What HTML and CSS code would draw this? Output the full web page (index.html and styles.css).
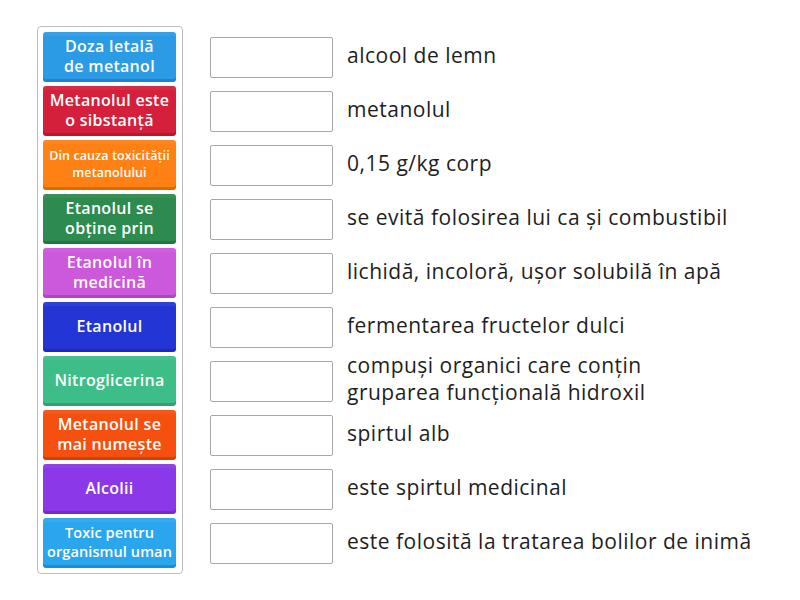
FILE: index.html
```html
<!DOCTYPE html>
<html lang="ro">
<head>
<meta charset="utf-8">
<link rel="stylesheet" href="styles.css">
</head>
<body>
<div class="page">
  <div class="bank">
    <div class="tile c1">Doza letală<br>de metanol</div>
    <div class="tile c2">Metanolul este<br>o sibstanță</div>
    <div class="tile c3 small">Din cauza toxicității<br>metanolului</div>
    <div class="tile c4">Etanolul se<br>obține prin</div>
    <div class="tile c5">Etanolul în<br>medicină</div>
    <div class="tile c6">Etanolul</div>
    <div class="tile c7">Nitroglicerina</div>
    <div class="tile c8">Metanolul se<br>mai numește</div>
    <div class="tile c9">Alcolii</div>
    <div class="tile c10 mid">Toxic pentru<br>organismul uman</div>
  </div>
  <div class="rows">
    <div class="row"><div class="slot"></div><div class="def">alcool de lemn</div></div>
    <div class="row"><div class="slot"></div><div class="def">metanolul</div></div>
    <div class="row"><div class="slot"></div><div class="def">0,15 g/kg corp</div></div>
    <div class="row"><div class="slot"></div><div class="def">se evită folosirea lui ca și combustibil</div></div>
    <div class="row"><div class="slot"></div><div class="def">lichidă, incoloră, ușor solubilă în apă</div></div>
    <div class="row"><div class="slot"></div><div class="def">fermentarea fructelor dulci</div></div>
    <div class="row"><div class="slot"></div><div class="def">compuși organici care conțin<br>gruparea funcțională hidroxil</div></div>
    <div class="row"><div class="slot"></div><div class="def">spirtul alb</div></div>
    <div class="row"><div class="slot"></div><div class="def">este spirtul medicinal</div></div>
    <div class="row"><div class="slot"></div><div class="def">este folosită la tratarea bolilor de inimă</div></div>
  </div>
</div>
</body>
</html>
```

FILE: styles.css
```css
html, body {
  margin: 0;
  padding: 0;
  background: #ffffff;
}
body {
  font-family: "Open Sans", "Noto Sans", sans-serif;
}
.page {
  display: flex;
  align-items: flex-start;
  padding: 26px 0 0 37px;
  gap: 27px;
}
.bank {
  display: flex;
  flex-direction: column;
  gap: 4px;
  padding: 5px 6px 5px 5px;
  border: 1px solid #bdbdbd;
  border-radius: 4px;
}
.tile {
  width: 133px;
  height: 50px;
  box-sizing: border-box;
  border-radius: 3px;
  display: flex;
  align-items: center;
  justify-content: center;
  text-align: center;
  color: #ffffff;
  font-size: 16px;
  font-weight: 600;
  line-height: 20px;
  letter-spacing: 0.3px;
  white-space: nowrap;
  padding: 0 2px 3px;
  box-shadow: inset 0 -3px 0 rgba(0,0,0,0.16), inset 0 4px 0 rgba(255,255,255,0.05);
}
.tile.small {
  font-size: 12.5px;
  line-height: 17px;
  letter-spacing: 0.1px;
}
.tile.mid {
  font-size: 14.5px;
  line-height: 19px;
  letter-spacing: 0.1px;
}
.c1 { background: #2b9be6; }
.c2 { background: #d4203b; }
.c3 { background: #ff8013; }
.c4 { background: #2e8b4f; }
.c5 { background: #cc58dc; }
.c6 { background: #2435d6; }
.c7 { background: #3dbe88; }
.c8 { background: #f5500f; }
.c9 { background: #8b38e8; }
.c10 { background: #2aa6ef; }
.rows {
  display: flex;
  flex-direction: column;
  gap: 4px;
  padding-top: 6px;
}
.row {
  display: flex;
  align-items: center;
  height: 50px;
  gap: 14px;
}
.slot {
  width: 123px;
  height: 41px;
  box-sizing: border-box;
  border: 1px solid #a8a8a8;
  border-radius: 2px;
  background: #ffffff;
  flex: none;
}
.def {
  font-size: 21px;
  line-height: 27px;
  letter-spacing: 0.5px;
  color: #1e1e1e;
  white-space: nowrap;
  padding-bottom: 4px;
}
```
